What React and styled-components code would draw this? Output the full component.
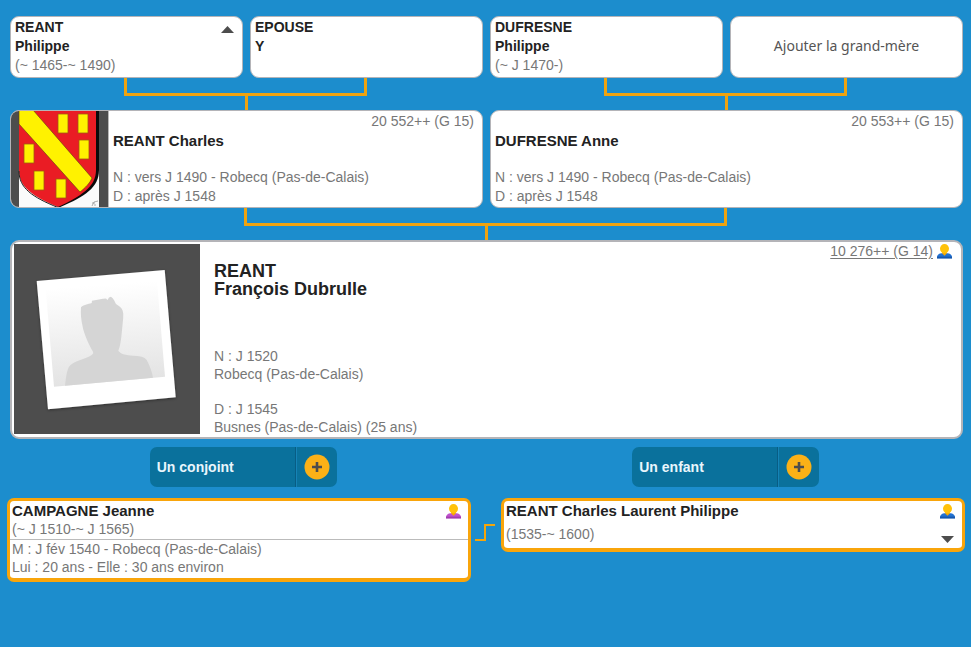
import styled, { createGlobalStyle } from "styled-components";

const GlobalStyle = createGlobalStyle`
  * {
    box-sizing: border-box;
  }
  body {
    margin: 0;
    background-color: #1c8dcd;
    font-family: "Liberation Sans", Arial, sans-serif;
  }
  p, h2, h3 {
    margin: 0;
  }
  button {
    font-family: inherit;
    border: none;
    cursor: pointer;
  }
`;

const UserIcon = ({ color, dark }) => (
  <UserSvg viewBox="0 0 15 15" aria-hidden="true">
    <path d="M0 14 V12.6 C0.8 10.4 2 9.400 4.5 9.200 H10.5 C13 9.400 14.200 10.4 15 12.6 V14 Z" fill={color} />
    <path d="M0 12.6 H15 V14.6 H0 Z" fill={dark} />
    <path d="M5.200 8 H9.800 V9.6 L7.5 11.8 L5.200 9.6 Z" fill="#f5a800" />
    <ellipse cx="7.5" cy="4.8" rx="4.5" ry="4.7" fill="#ffc20a" />
  </UserSvg>
);

const Man = () => <UserIcon color="#2371cf" dark="#1457ae" />;
const Woman = () => <UserIcon color="#c052cc" dark="#a23bb0" />;

const Shield = () => (
  <ShieldSvg viewBox="0 0 99 98" preserveAspectRatio="none" role="img" aria-label="Blason">
    <rect width="99" height="98" fill="#4d4d4d" />
    <rect x="9" width="80" height="98" fill="#fbfbfb" />
    <path d="M12 0 H89 V60 C89 78 74 87 48 98 Z" fill="#0b0b0b" />
    <path d="M9 0 H86 V60 C86 77 71 86 48 97 C22 86 9 77 9 60 Z" fill="#ea1c24" />
    <path d="M9 61 C9 78 22 87 48 97.5" fill="none" stroke="#222" strokeWidth="1" />
    <path d="M9 0 H23 L82 68 C80 73 75 78 70 82 L9 14 Z" fill="#fff200" stroke="#5e3d10" strokeWidth="0.6" />
    <g fill="#fff200" stroke="#a35a10" strokeWidth="0.8">
      <rect x="48" y="4" width="10" height="19" />
      <rect x="68" y="4" width="10" height="19" />
      <rect x="69" y="30" width="10" height="19" />
      <rect x="14" y="34" width="10" height="19" />
      <rect x="24" y="61" width="10" height="19" />
      <rect x="46" y="69" width="10" height="19" />
    </g>
    <path d="M82 96 L84 92 L88 91 M82 93 H85 M84 95 H86" fill="none" stroke="#999" strokeWidth="0.8" />
    <rect x="98" width="1" height="98" fill="#b8b8b8" />
  </ShieldSvg>
);

const Portrait = () => (
  <PortraitSvg viewBox="0 0 186 190" role="img" aria-label="Portrait">
    <defs>
      <linearGradient id="paper" x1="0" y1="0" x2="0.08" y2="1">
        <stop offset="0.1" stopColor="#fff" />
        <stop offset="1" stopColor="#e3e3e3" />
      </linearGradient>
      <filter id="shadow" x="-10%" y="-10%" width="120%" height="120%">
        <feDropShadow dx="0" dy="1" stdDeviation="1.5" floodOpacity="0.4" />
      </filter>
    </defs>
    <rect width="186" height="190" fill="#4d4d4d" />
    <path d="M22.7 37 L150.7 26 L161.7 153.3 L34 165.3 Z" fill="#fff" filter="url(#shadow)" />
    <path d="M31.5 43 L142.7 34 L151 132.7 L40 142.7 Z" fill="url(#paper)" />
    <path
      d="M51 141.7 C52 133 53 126 55 122.7 C59 117 72 115 77.7 111 Q80 109.5 79 107.7 C75 101 70 90 68.7 82.7 C67 76 66.5 69 67 63.3 C69 61 74 60 77.7 59 L78 56.7 L89 54.7 L92 54.4 L93.5 56 L95 53.5 L97 52.7 C100 55 101 58 102 60 C105 62 108 64 108.7 66.7 Q109.7 70 109.2 74 L107.7 89.3 C107 97 106 103 104.3 106.7 Q106 109 109.3 110.3 C116 112 122 111.5 127.7 112.7 Q131 113.5 132.7 116 C136 122 138 128 139 133.7 Z"
      fill="#d5d5d5"
    />
  </PortraitSvg>
);

const ActionGroup = ({ label }) => (
  <Group>
    <GroupLabel type="button">{label}</GroupLabel>
    <GroupAdd type="button" aria-label={`Ajouter : ${label}`}>
      <svg width="26" height="26" viewBox="0 0 26 26" aria-hidden="true">
        <circle cx="13" cy="13" r="12.5" fill="#fbb117" />
        <path d="M13 8 V18 M8 13 H18" stroke="#4d4d4d" strokeWidth="2.6" />
      </svg>
    </GroupAdd>
  </Group>
);

const App = () => {
  return (
    <Page>
      <GlobalStyle />
      <Tree>
        <Generation $columns={4}>
          <SmallCard>
            <Name>REANT</Name>
            <Name>Philippe</Name>
            <Info>(~ 1465-~ 1490)</Info>
            <ArrowButton type="button" aria-label="Remonter" $top>
              <svg width="13" height="7" viewBox="0 0 13 7" aria-hidden="true">
                <path d="M0 7 L6.5 0 L13 7 Z" fill="#4d4d4d" />
              </svg>
            </ArrowButton>
          </SmallCard>
          <SmallCard>
            <Name>EPOUSE</Name>
            <Name>Y</Name>
          </SmallCard>
          <SmallCard>
            <Name>DUFRESNE</Name>
            <Name>Philippe</Name>
            <Info>(~ J 1470-)</Info>
          </SmallCard>
          <AddCard type="button">Ajouter la grand-mère</AddCard>
        </Generation>

        <Generation $columns={2}>
          <Link><Bracket /><Stem /></Link>
          <Link><Bracket /><Stem /></Link>
        </Generation>

        <Generation $columns={2}>
          <ParentCard>
            <Shield />
            <ParentBody>
              <Ref>20 552++ (G 15)</Ref>
              <Name>REANT Charles</Name>
              <Facts>
                <Info>N : vers J 1490 - Robecq (Pas-de-Calais)</Info>
                <Info>D : après J 1548</Info>
              </Facts>
            </ParentBody>
          </ParentCard>
          <ParentCard>
            <ParentBody>
              <Ref>20 553++ (G 15)</Ref>
              <Name>DUFRESNE Anne</Name>
              <Facts>
                <Info>N : vers J 1490 - Robecq (Pas-de-Calais)</Info>
                <Info>D : après J 1548</Info>
              </Facts>
            </ParentBody>
          </ParentCard>
        </Generation>

        <Link><Bracket /><Stem /></Link>

        <MainCard>
          <Portrait />
          <MainBody>
            <h2>
              <span>REANT</span>
              <span>François Dubrulle</span>
            </h2>
            <Event>
              <p>N : J 1520</p>
              <p>Robecq (Pas-de-Calais)</p>
            </Event>
            <Event>
              <p>D : J 1545</p>
              <p>Busnes (Pas-de-Calais) (25 ans)</p>
            </Event>
          </MainBody>
          <MainRef>
            <a href="#sosa">10 276++ (G 14)</a>
            <Man />
          </MainRef>
        </MainCard>
      </Tree>

      <Actions>
        <ActionGroup label="Un conjoint" />
        <ActionGroup label="Un enfant" />
      </Actions>

      <Family>
        <FamilyCard>
          <FamilyHead>
            <div>
              <Name>CAMPAGNE Jeanne</Name>
              <Info>(~ J 1510-~ J 1565)</Info>
            </div>
            <Side><Woman /></Side>
          </FamilyHead>
          <Marriage>
            <Info>M : J fév 1540 - Robecq (Pas-de-Calais)</Info>
            <Info>Lui : 20 ans - Elle : 30 ans environ</Info>
          </Marriage>
        </FamilyCard>
        <Step viewBox="0 0 22 19" aria-hidden="true">
          <path d="M0 17 H10 V2 H20" fill="none" stroke="#f5a50a" strokeWidth="2" />
        </Step>
        <FamilyCard>
          <FamilyHead $child>
            <div>
              <Name>REANT Charles Laurent Philippe</Name>
              <Info>(1535-~ 1600)</Info>
            </div>
            <Side>
              <Man />
              <ArrowButton type="button" aria-label="Descendre">
                <svg width="13" height="7" viewBox="0 0 13 7" aria-hidden="true">
                  <path d="M0 0 L6.5 7 L13 0 Z" fill="#4d4d4d" />
                </svg>
              </ArrowButton>
            </Side>
          </FamilyHead>
        </FamilyCard>
      </Family>
    </Page>
  );
};

export default App;

const Page = styled.main`
  min-height: 100vh;
  background-color: #1c8dcd;
`;

const Tree = styled.section`
  padding: 16px 8px 0 10px;
`;

const Generation = styled.div`
  display: grid;
  grid-template-columns: repeat(${({ $columns }) => $columns}, 1fr);
  column-gap: 7px;
`;

const Name = styled.h3`
  font-size: 15px;
  line-height: 19px;
  color: #222;
`;

const Info = styled.p`
  font-size: 14px;
  line-height: 19px;
  color: #777;
`;

const Card = styled.article`
  background-color: #fff;
  border: 1px solid #b4b4b8;
  border-radius: 9px;
  overflow: hidden;
`;

const SmallCard = styled(Card)`
  position: relative;
  min-height: 62px;
  padding: 1px 4px;

  ${Name} {
    font-size: 14px;
  }
`;

const AddCard = styled.button`
  padding: 0 6px 4px;
  background-color: #fff;
  border: 1px solid #b4b4b8;
  border-radius: 9px;
  color: #555;
  font-family: "Noto Sans", sans-serif;
  font-size: 14px;
`;

const ArrowButton = styled.button`
  display: flex;
  padding: 0;
  background-color: transparent;
  ${({ $top }) => $top && `
    position: absolute;
    top: 9px;
    right: 8px;
  `}
`;

/* orange lines between two generations */
const Link = styled.div`
  display: flex;
  flex-direction: column;
  height: 32px;
  padding: 0 calc(25% - 2px) 0 calc(25% - 4px);
`;

const Bracket = styled.div`
  height: 18px;
  border: 3px solid #f0a30f;
  border-top: none;
`;

const Stem = styled.div`
  align-self: center;
  width: 3px;
  margin-left: 2px;
  flex: 1;
  background-color: #f0a30f;
`;

const ParentCard = styled(Card)`
  display: flex;
  height: 98px;
`;

const ShieldSvg = styled.svg`
  width: 99px;
  height: 98px;
  margin: -1px 0 -1px -1px;
  flex-shrink: 0;
`;

const ParentBody = styled.div`
  flex: 1;
  padding: 1px 8px 0 4px;
`;

const Ref = styled.p`
  font-size: 14px;
  line-height: 19px;
  color: #777;
  text-align: right;
`;

const Facts = styled.div`
  margin-top: 18px;
`;

const MainCard = styled(Card)`
  position: relative;
  display: flex;
  min-height: 199px;
  padding: 2px 2px 0;
  border-width: 2px;
`;

const PortraitSvg = styled.svg`
  width: 186px;
  height: 190px;
  flex-shrink: 0;
`;

const MainBody = styled.div`
  padding: 18px 0 0 14px;
  color: #777;
  font-size: 14px;
  line-height: 18px;

  h2 {
    margin-bottom: 49px;
    font-size: 18px;
    line-height: 18px;
    color: #222;
  }
  h2 span {
    display: block;
  }
`;

const Event = styled.div`
  & + & {
    margin-top: 17px;
  }
`;

const MainRef = styled.div`
  display: flex;
  align-items: flex-start;
  gap: 4px;
  margin-left: auto;
  padding-right: 7px;
  font-size: 14px;
  line-height: 14px;

  a {
    color: #777;
    text-underline-offset: 2px;
  }
`;

const UserSvg = styled.svg`
  width: 15px;
  height: 15px;
`;

const Actions = styled.div`
  display: grid;
  grid-template-columns: 1fr 1fr;
  justify-items: center;
  padding: 8px 4px 11px 2px;
`;

const Group = styled.div`
  display: flex;
  width: 187px;
  height: 40px;
  border-radius: 7px;
  overflow: hidden;
  background-color: #0a719c;
`;

const GroupLabel = styled.button`
  flex: 1;
  padding: 0 7px;
  background-color: transparent;
  border-right: 1px solid #085d85;
  color: #e9f6fc;
  font-size: 14px;
  font-weight: bold;
  text-align: left;
`;

const GroupAdd = styled.button`
  display: flex;
  justify-content: center;
  align-items: center;
  width: 41px;
  padding: 0;
  background-color: transparent;
  border-left: 1px solid #1683b6;
`;

const Family = styled.section`
  display: grid;
  grid-template-columns: 1fr 30px 1fr;
  align-items: start;
  padding: 0 6px 0 7px;
`;

const FamilyCard = styled.article`
  background-color: #fff;
  border: 3px solid #f9a50b;
  border-bottom-width: 4px;
  border-radius: 7px;
`;

const FamilyHead = styled.div`
  display: flex;
  justify-content: space-between;
  padding: 0 7px 0 2px;

  ${Info} {
    margin-top: ${({ $child }) => ($child ? "5px" : "0")};
    margin-bottom: ${({ $child }) => ($child ? "4px" : "0")};
  }
`;

const Side = styled.div`
  display: flex;
  flex-direction: column;
  align-items: center;
  justify-content: space-between;
  padding: 3px 0 5px;
`;

const Marriage = styled.div`
  padding: 0 2px 2px;
  border-top: 1px solid #bbb;

  ${Info} {
    line-height: 18px;
  }
`;

const Step = styled.svg`
  width: 22px;
  height: 19px;
  margin: 25px auto 0;
`;
